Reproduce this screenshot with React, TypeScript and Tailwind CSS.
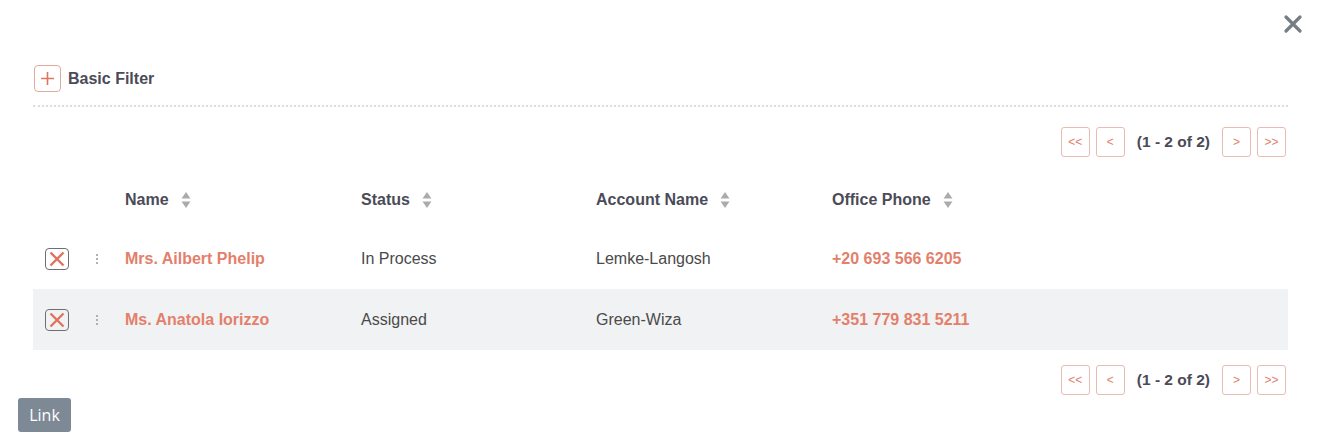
import React from "react";

const rows = [
  { name: "Mrs. Ailbert Phelip", status: "In Process", account: "Lemke-Langosh", phone: "+20 693 566 6205" },
  { name: "Ms. Anatola Iorizzo", status: "Assigned", account: "Green-Wiza", phone: "+351 779 831 5211" },
];

const SortIcon = () => (
  <svg width="10" height="18" viewBox="0 0 10 18" className="ml-3 shrink-0">
    <path d="M5 1 L9.5 7.5 L0.5 7.5 Z" fill="#ababab" />
    <path d="M5 17 L9.5 10.5 L0.5 10.5 Z" fill="#ababab" />
  </svg>
);

const Pager = () => (
  <div className="flex items-center justify-end">
    <button className="w-[29px] h-[30px] border border-[#e6bcb3] rounded-[3px] text-[12px] text-[#e07e6c] flex items-center justify-center">
      &lt;&lt;
    </button>
    <button className="ml-[6px] w-[29px] h-[30px] border border-[#e6bcb3] rounded-[3px] text-[12px] text-[#e07e6c] flex items-center justify-center">
      &lt;
    </button>
    <span className="mx-[12px] text-[15.5px] font-bold text-[#4b4b57]">(1 - 2 of 2)</span>
    <button className="w-[29px] h-[30px] border border-[#e6bcb3] rounded-[3px] text-[12px] text-[#e07e6c] flex items-center justify-center">
      &gt;
    </button>
    <button className="ml-[6px] w-[29px] h-[30px] border border-[#e6bcb3] rounded-[3px] text-[12px] text-[#e07e6c] flex items-center justify-center">
      &gt;&gt;
    </button>
  </div>
);

const cols = "grid grid-cols-[52px_40px_236px_235px_236px_1fr] items-center";

export default function App() {
  return (
    <div className="w-[1320px] h-[448px] bg-white relative font-['Liberation_Sans',Arial,sans-serif] text-[#4a4a4a]">
      <button className="absolute right-[17px] top-[14px] text-[#777d84]">
        <svg width="20" height="20" viewBox="0 0 20 20">
          <path d="M3 3 L17 17 M17 3 L3 17" stroke="currentColor" strokeWidth="3.2" strokeLinecap="round" />
        </svg>
      </button>

      <div className="pl-[33px] pr-[32px] pt-[65px]">
        <div className="flex items-center pl-[1px]">
          <div className="w-[27px] h-[27px] border border-[#e2a99e] rounded-[4px] flex items-center justify-center">
            <svg width="15" height="15" viewBox="0 0 15 15">
              <path d="M7.5 1 V14 M1 7.5 H14" stroke="#e07464" strokeWidth="1.6" />
            </svg>
          </div>
          <span className="ml-[7px] text-[16px] font-bold text-[#4b4b57]">Basic Filter</span>
        </div>

        <div className="mt-[13px] border-b-2 border-dotted border-[#dcdcdc]" />

        <div className="mt-[20px] pr-[2px]">
          <Pager />
        </div>

        <div className={`${cols} h-[56px] mt-[15px] text-[16px] font-bold text-[#4b4b57]`}>
          <div />
          <div />
          <div className="flex items-center">Name<SortIcon /></div>
          <div className="flex items-center">Status<SortIcon /></div>
          <div className="flex items-center">Account Name<SortIcon /></div>
          <div className="flex items-center">Office Phone<SortIcon /></div>
        </div>

        {rows.map((r, i) => (
          <div
            key={r.name}
            className={`${cols} h-[61px] text-[16px] ${i % 2 === 1 ? "bg-[#f1f2f4]" : ""}`}
          >
            <div className="pl-[12px]">
              <div className="w-[24px] h-[22px] border border-[#6f6f6f] rounded-[4px] flex items-center justify-center">
                <svg width="18" height="18" viewBox="0 0 18 18">
                  <path d="M2.5 2.5 L15.5 15.5 M15.5 2.5 L2.5 15.5" stroke="#e0735f" strokeWidth="2.4" />
                </svg>
              </div>
            </div>
            <div className="pl-[10px]">
              <svg width="4" height="14" viewBox="0 0 4 14">
                <circle cx="2" cy="3" r="1.1" fill="#9aa0a6" />
                <circle cx="2" cy="7" r="1.1" fill="#9aa0a6" />
                <circle cx="2" cy="11" r="1.1" fill="#9aa0a6" />
              </svg>
            </div>
            <div className="font-bold text-[#e3806b]">{r.name}</div>
            <div>{r.status}</div>
            <div>{r.account}</div>
            <div className="font-bold text-[#e3806b]">{r.phone}</div>
          </div>
        ))}

        <div className="mt-[15px] pr-[2px]">
          <Pager />
        </div>
      </div>

      <button className="absolute left-[18px] top-[398px] w-[53px] h-[34px] bg-[#7d8a96] rounded-[3px] text-white text-[16px] font-['Open_Sans',sans-serif]">
        Link
      </button>
    </div>
  );
}
